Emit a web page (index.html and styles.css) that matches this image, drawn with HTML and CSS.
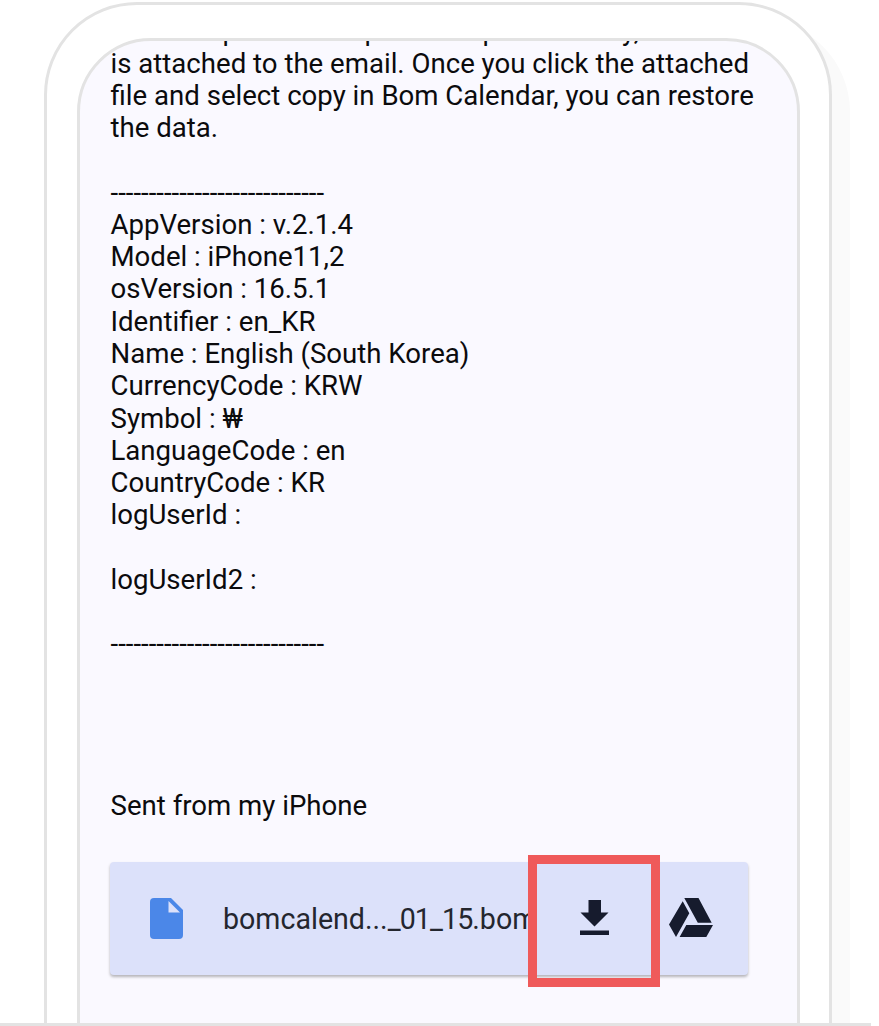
FILE: index.html
```html
<!DOCTYPE html>
<html lang="en">
<head>
<meta charset="utf-8">
<title>Backup email</title>
<link rel="stylesheet" href="styles.css">
</head>
<body>
<main class="stage">
  <div class="phone">
    <div class="screen">
      <div class="mail">
        <p class="clipped"><span>When the</span><span>phone is set</span><span>prior to</span><span>permanently,</span></p>
        <p>is attached to the email. Once you click the attached<br>file and select copy in Bom Calendar, you can restore<br>the data.</p>
        <p class="block">----------------------------<br>AppVersion : v.2.1.4<br>Model : iPhone11,2<br>osVersion : 16.5.1<br>Identifier : en_KR<br>Name : English (South Korea)<br>CurrencyCode : KRW<br>Symbol : <span class="won">₩</span><br>LanguageCode : en<br>CountryCode : KR<br>logUserId :</p>
        <p class="block">logUserId2 :</p>
        <p class="block">----------------------------</p>
        <p class="signature">Sent from my iPhone</p>
      </div>
      <div class="attachment">
        <svg class="file" viewBox="0 0 33 41"><path fill="#4b87e8" d="M4 0H21L33 12V37Q33 41 29 41H4Q0 41 0 37V4Q0 0 4 0Z"/><path fill="#dce1fa" d="M18.5 3V14.5H30Z"/></svg>
        <span class="name">bomcalend...<span class="date">_01_15</span>.bom</span>
        <button class="download" aria-label="Download"><svg viewBox="0 0 29 35"><path fill="#161b2d" d="M8.5 0H21V12.5H28.5L14.5 26.5L.5 12.5H8.5ZM0 30.5H29V35H0Z"/></svg></button>
        <svg class="drive" viewBox="0 0 44 39"><path fill="#161b2d" d="M15.3 0H29.5L42.7 24.7H28.8ZM13.7 3.3L20.3 15.3L7 39L0 26.5ZM17.3 27H44L37.3 39H10.6Z"/></svg>
      </div>
    </div>
  </div>
</main>
</body>
</html>
```
FILE: styles.css
```css
* { box-sizing: border-box; }
body { margin: 0; background: #fff; color: #0b0b0d; font-family: Roboto, "Noto Sans CJK KR", sans-serif; }
.stage { height: 1026px; overflow: hidden; padding: 2px 0 0 43.5px; position: relative; }
.stage::after { content: ""; position: absolute; left: 0; bottom: 0; width: 871px; height: 3px; background: #e3e3e3; }
.phone { width: 788.5px; height: 1200px; padding: 32.5px 30.5px 0; border: 3px solid #e3e3e3; border-radius: 93px; background: #fff; box-shadow: 18px 17px 0 #fafafa; }
.screen { width: 722.5px; height: 1150px; border: 3px solid #e3e3e3; border-radius: 74px; background: #faf9ff; overflow: hidden; padding-left: 30px; }
.mail { margin-top: -25.2px; padding-left: 0.5px; font-size: 27.6px; line-height: 32.27px; white-space: nowrap; }
.mail p { margin: 0; }
.clipped { display: grid; grid-template-columns: 112px 142px 118px 150px; }
.mail .block { margin-top: 32.27px; }
.mail .signature { margin-top: 129.1px; }
.attachment { width: 638px; height: 112.5px; margin-top: 40.5px; padding-left: 40px; display: flex; align-items: center; border-radius: 4px; background: #dce1fa; box-shadow: 0 2px 3px rgba(0,0,0,.28); }
.file { width: 33px; height: 41px; flex: none; }
.name { width: 305px; margin-left: 40px; overflow: hidden; white-space: nowrap; font-size: 28.6px; color: #24262e; }
.date { letter-spacing: -0.9px; }
.download { width: 132px; height: 132px; margin-top: 4px; flex: none; padding: 0 0 6px; border: 9px solid #ef5a5a; background: none; display: flex; align-items: center; justify-content: center; }
.download svg { width: 29px; height: 35px; }
.drive { width: 44px; height: 39px; margin: 0 0 3px 9px; flex: none; }
```
